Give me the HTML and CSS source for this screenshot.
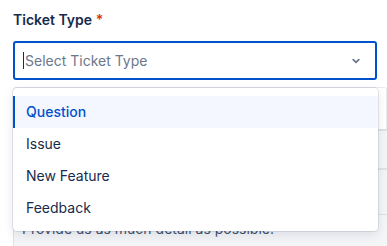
FILE: index.html
```html
<!DOCTYPE html>
<html>
<head>
<meta charset="utf-8">
<link rel="stylesheet" href="styles.css">
</head>
<body>
<div class="page">
  <div class="label">Ticket Type <span class="req">*</span></div>
  <div class="select">
    <span class="caret"></span>
    <span class="placeholder">Select Ticket Type</span>
    <svg class="chev" width="10" height="10" viewBox="0 0 10 10"><path d="M2.2 3.6 L5 6.3 L7.8 3.6" fill="none" stroke="#6b778c" stroke-width="1.8" stroke-linecap="round" stroke-linejoin="round"/></svg>
  </div>
  <div class="under">
    <div class="blank"></div>
    <div class="field"></div>
    <div class="gapline"></div>
    <div class="desc">Provide us as much detail as possible.</div>
  </div>
  <div class="menu">
    <div class="opt selected">Question</div>
    <div class="opt">Issue</div>
    <div class="opt">New Feature</div>
    <div class="opt">Feedback</div>
  </div>
</div>
</body>
</html>
```
FILE: styles.css
```css
html, body {
  margin: 0;
  padding: 0;
  background: #ffffff;
  overflow: hidden;
  height: 246px;
}
body {
  font-family: Inter, "Noto Sans", "Liberation Sans", sans-serif;
  font-size: 14px;
  color: #172b4d;
}
.page {
  position: relative;
  padding: 10px 0 0 13px;
}
.label {
  font-weight: 600;
  font-size: 14px;
  line-height: 20px;
  color: #172b4d;
}
.req {
  color: #de350b;
}
.select {
  margin-top: 11px;
  width: 364px;
  height: 39px;
  box-sizing: border-box;
  border: 2px solid #0052cc;
  border-radius: 3px;
  display: flex;
  align-items: center;
  padding-left: 8px;
  padding-right: 14px;
}
.caret {
  width: 1px;
  height: 17px;
  background: #172b4d;
  margin-right: 1px;
}
.placeholder {
  flex: 1;
  color: #6b778c;
  font-size: 14px;
}
.chev {
  display: block;
}
.under {
  margin-top: 7px;
  width: 374px;
}
.blank {
  height: 41px;
  border: 1px solid #ebecf0;
  border-bottom: none;
  border-radius: 3px 3px 0 0;
}
.field {
  height: 37px;
  border-top: 2px solid #dfe1e6;
  border-bottom: 2px solid #dfe1e6;
  background: #f4f5f7;
}
.gapline {
  height: 44px;
  background: #f4f5f7;
}
.desc {
  border-top: 1px solid #dfe1e6;
  border-left: 1px solid #dfe1e6;
  background: #f4f5f7;
  padding: 5px 8px 20px;
  color: #42526e;
  font-size: 14px;
  white-space: nowrap;
}
.menu {
  position: absolute;
  left: 13px;
  top: 88px;
  width: 365px;
  background: #ffffff;
  border-radius: 4px;
  box-shadow: 0 0 0 1px rgba(9, 30, 66, 0.1), 0 4px 11px rgba(9, 30, 66, 0.1);
  padding: 8px 0 7px;
}
.opt {
  height: 32px;
  line-height: 32px;
  padding-left: 13px;
  color: #172b4d;
  font-size: 14px;
}
.opt.selected {
  background: #f4f7ff;
  color: #0052cc;
  font-weight: 500;
  box-shadow: inset 2px 0 0 #0052cc;
}
```
